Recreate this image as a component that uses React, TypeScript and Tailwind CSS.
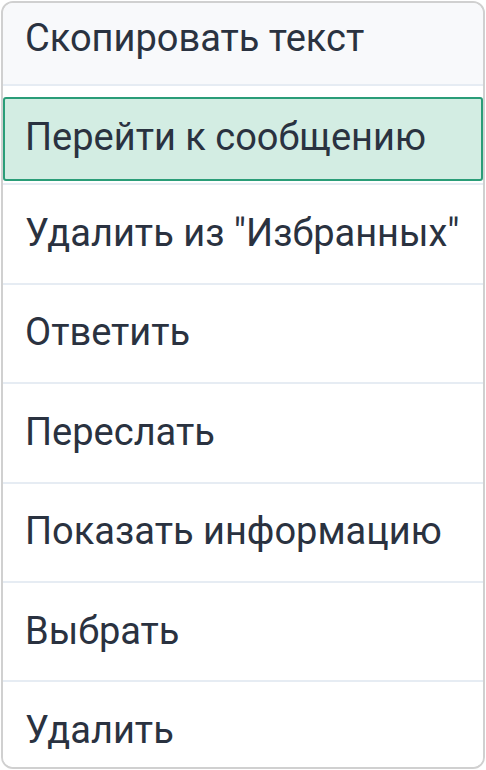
import React from "react";

const items = [
  "Удалить из \"Избранных\"",
  "Ответить",
  "Переслать",
  "Показать информацию",
  "Выбрать",
  "Удалить",
];

export default function App() {
  return (
    <div
      className="w-[486px] h-[770px] bg-white p-[1px]"
      style={{ fontFamily: "Roboto, 'Noto Sans', sans-serif" }}
    >
      <div className="h-[768px] w-[484px] rounded-[12px] border-2 border-[#d0d0d0] overflow-hidden flex flex-col text-[#2a3240] text-[38px] leading-none">
        <div className="h-[81px] shrink-0 bg-[#f8f9fb] flex items-center pl-[22px] pb-[12px]">
          Скопировать текст
        </div>
        <div className="h-[2px] shrink-0 bg-[#e6ecf3]" />
        <div className="h-[97.4px] shrink-0 bg-white pt-[11px] pb-[2px] flex flex-col">
          <div className="flex-1 flex items-center pl-[20px] pb-[5px] border-2 border-[#2a9d78] bg-[#d3ede3] rounded-[3px]">
            Перейти к сообщению
          </div>
        </div>
        {items.map((t, i) => (
          <React.Fragment key={i}>
            <div className="h-[2px] shrink-0 bg-[#e6ecf3]" />
            <div className="h-[97.4px] shrink-0 bg-white flex items-center pl-[22px] pb-[2px]">
              {t}
            </div>
          </React.Fragment>
        ))}
      </div>
    </div>
  );
}
